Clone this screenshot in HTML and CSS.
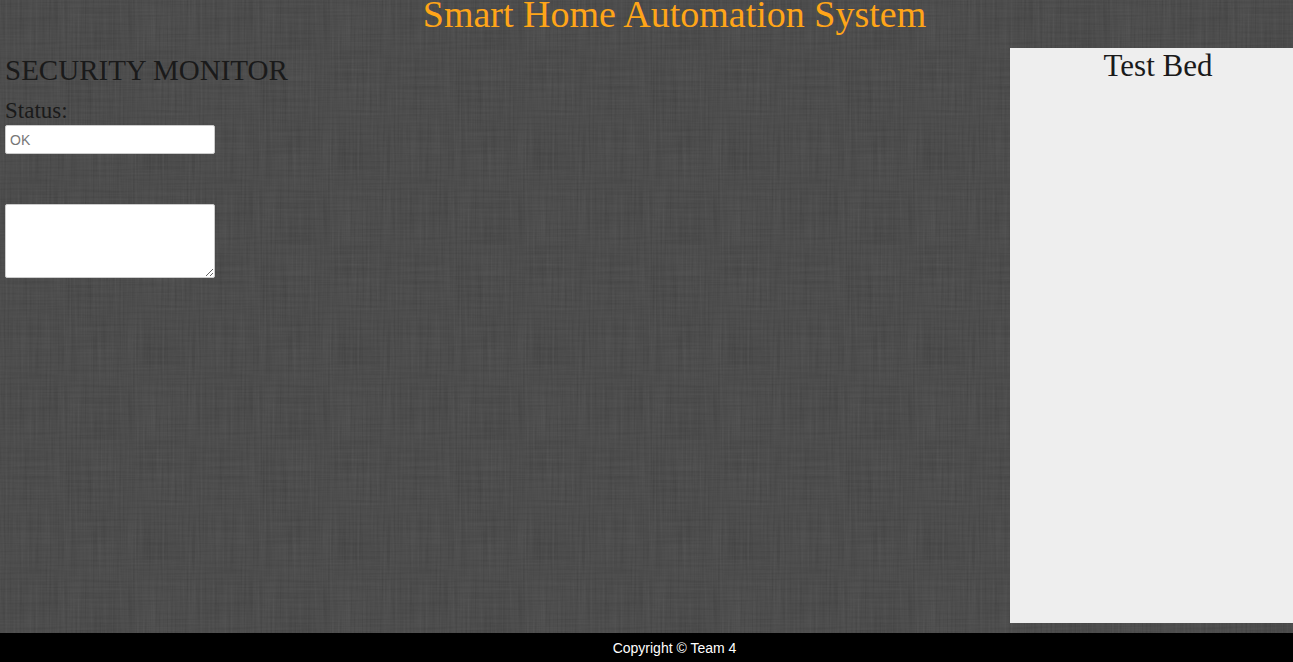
FILE: index.html
```html
<!DOCTYPE html>
<html lang="en">
<head>
<meta charset="utf-8">
<title>Smart Home Automation System</title>
<link rel="stylesheet" href="styles.css">
</head>
<body>
<header class="header">
  <h1 class="title">Smart Home Automation System</h1>
</header>
<main class="main">
  <section class="monitor">
    <h2 class="heading">SECURITY MONITOR</h2>
    <label class="label" for="status">Status:</label>
    <input class="field" id="status" type="text" placeholder="OK">
    <textarea class="field log" aria-label="Security log"></textarea>
  </section>
  <aside class="testbed">
    <h2 class="heading testbed-heading">Test Bed</h2>
  </aside>
</main>
<footer class="footer">Copyright © Team 4</footer>
</body>
</html>
```

FILE: styles.css
```css
* {
  box-sizing: border-box;
}

body {
  margin: 0;
  min-height: 100vh;
  display: flex;
  flex-direction: column;
  color: #1a1a1a;
  font-family: Georgia, "Liberation Serif", serif;
  background-color: #4b4b4b;
  /* linen: one noise layer stretched along each axis */
  background-image: url("data:image/svg+xml,%3Csvg xmlns='http://www.w3.org/2000/svg' width='195' height='195'%3E%3Cfilter id='v' x='0' y='0' width='100%25' height='100%25' color-interpolation-filters='sRGB'%3E%3CfeTurbulence type='fractalNoise' baseFrequency='0.5 0.015' numOctaves='2' seed='4' stitchTiles='stitch'/%3E%3CfeColorMatrix values='0.11 0 0 0 0.243 0.11 0 0 0 0.243 0.11 0 0 0 0.243 0 0 0 0 1'/%3E%3C/filter%3E%3Cfilter id='h' x='0' y='0' width='100%25' height='100%25' color-interpolation-filters='sRGB'%3E%3CfeTurbulence type='fractalNoise' baseFrequency='0.015 0.5' numOctaves='2' seed='9' stitchTiles='stitch'/%3E%3CfeColorMatrix values='0.1 0 0 0 0.248 0.1 0 0 0 0.248 0.1 0 0 0 0.248 0 0 0 0 1'/%3E%3C/filter%3E%3Crect width='195' height='195' filter='url(%23v)'/%3E%3Crect width='195' height='195' filter='url(%23h)' opacity='.45'/%3E%3C/svg%3E");
  background-position: 0 -12px;
}

.header {
  height: 48px;
  padding-left: 56px;
}

.title {
  margin: 0;
  color: #ffa518;
  font-size: 38px;
  font-weight: 400;
  line-height: 28px;
  text-align: center;
}

.main {
  flex: 1;
  display: flex;
  padding-bottom: 10px;
}

.monitor {
  flex: 1;
  display: flex;
  flex-direction: column;
  align-items: flex-start;
  padding: 4px 5px 0;
}

.heading {
  margin: 0;
  font-size: 29px;
  font-weight: 400;
  line-height: 36px;
}

.label {
  margin-top: 9px;
  font-size: 23px;
  line-height: 28px;
}

.field {
  width: 210px;
  height: 29px;
  margin: 0;
  padding: 4px;
  border: 1px solid #ccc;
  border-radius: 2px;
  background: #fff;
  font-family: Arial, "Liberation Sans", sans-serif;
  font-size: 14px;
}

.field::placeholder {
  color: #777;
}

.log {
  height: 74px;
  margin-top: 50px;
}

.testbed {
  width: 283px;
  padding-left: 13px;
  background: #eee;
  text-align: center;
}

.testbed-heading {
  font-size: 31px;
}

.footer {
  padding-top: 1px;
  padding-left: 56px;
  background: #000;
  color: #fff;
  font-family: Arial, "Liberation Sans", sans-serif;
  font-size: 14px;
  line-height: 28px;
  text-align: center;
}
```
